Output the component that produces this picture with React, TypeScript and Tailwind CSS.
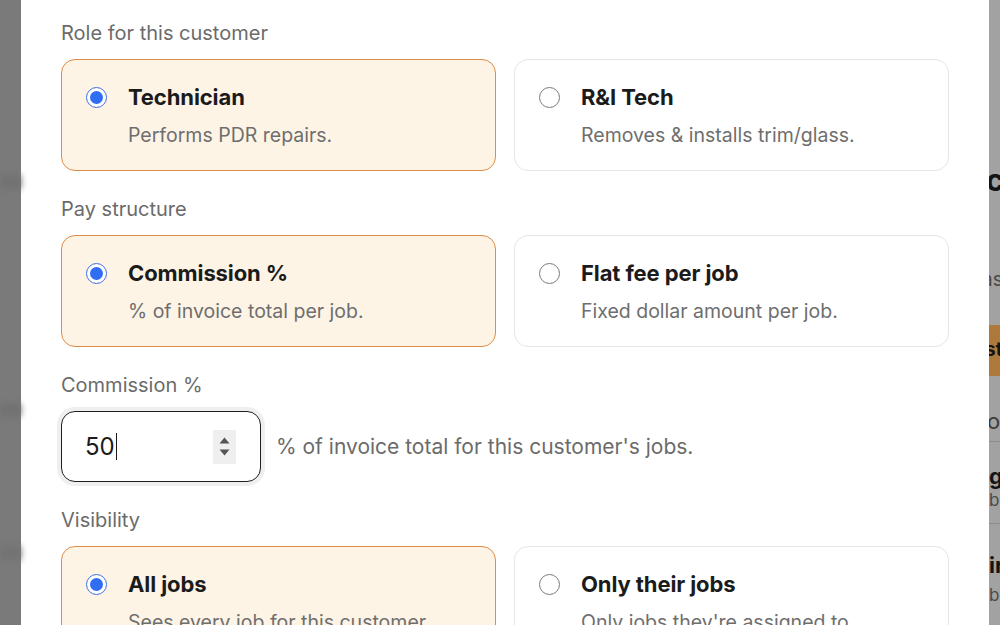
import React from "react";

type Opt = { title: string; desc: string };

function Radio({ checked }: { checked: boolean }) {
  if (checked) {
    return (
      <span className="flex h-[21px] w-[21px] shrink-0 items-center justify-center rounded-full border-[1.5px] border-[#3b6fe3] bg-white">
        <span className="h-[13px] w-[13px] rounded-full bg-[#2f6ef2]" />
      </span>
    );
  }
  return <span className="h-[21px] w-[21px] shrink-0 rounded-full border-[1.5px] border-[#7a7a7a] bg-white" />;
}

function Card({ opt, checked }: { opt: Opt; checked: boolean }) {
  return (
    <div
      className={
        checked
          ? "flex h-[112px] items-start gap-[21px] rounded-[14px] border-[1.5px] border-[#df8c48] bg-[#fdf4e6] pl-[24px] pt-[22px]"
          : "flex h-[112px] items-start gap-[21px] rounded-[14px] border-[1.5px] border-[#e6e6e6] bg-white pl-[24px] pt-[22px]"
      }
    >
      <div className="flex h-[30px] items-center">
        <Radio checked={checked} />
      </div>
      <div className="flex flex-col">
        <div className="text-[22px] font-bold leading-[30px] tracking-[-0.1px] text-[#1b1b1b]">{opt.title}</div>
        <div className="mt-[9px] text-[19.5px] leading-[28px] text-[#6e6e6e]">{opt.desc}</div>
      </div>
    </div>
  );
}

function Section({ label, options }: { label: string; options: Opt[] }) {
  return (
    <div className="flex flex-col">
      <div className="mb-[12px] text-[20px] leading-[28px] text-[#6b6b6b]">{label}</div>
      <div className="grid grid-cols-2 gap-[18px]">
        <Card opt={options[0]} checked />
        <Card opt={options[1]} checked={false} />
      </div>
    </div>
  );
}

export default function App() {
  return (
    <div
      className="flex h-[625px] w-[1000px] overflow-hidden bg-white"
      style={{ fontFamily: "Inter, 'Noto Sans', 'Liberation Sans', sans-serif" }}
    >
      {/* left backdrop */}
      <div className="flex w-[21px] shrink-0 flex-col bg-[#7a7a7a]">
        <div className="h-[175px]" />
        <div className="h-[14px] bg-[#727272] blur-[3px]" />
        <div className="h-[215px]" />
        <div className="h-[12px] bg-[#717171] blur-[3px]" />
        <div className="h-[130px]" />
        <div className="h-[14px] bg-[#737373] blur-[3px]" />
      </div>

      {/* modal */}
      <div className="flex w-[968px] shrink-0 flex-col gap-[24px] bg-white px-[40px] pt-[19px]">
        <Section
          label="Role for this customer"
          options={[
            { title: "Technician", desc: "Performs PDR repairs." },
            { title: "R&I Tech", desc: "Removes & installs trim/glass." },
          ]}
        />
        <Section
          label="Pay structure"
          options={[
            { title: "Commission %", desc: "% of invoice total per job." },
            { title: "Flat fee per job", desc: "Fixed dollar amount per job." },
          ]}
        />
        <div className="flex flex-col">
          <div className="mb-[12px] text-[20px] leading-[28px] text-[#6b6b6b]">Commission %</div>
          <div className="flex items-center gap-[15px]">
            <div className="flex h-[71px] w-[200px] items-center rounded-[14px] border-[1.5px] border-[#1f1f1f] bg-white pl-[23px] pr-[24px] shadow-[0_0_0_4px_#efefef]">
              <span className="text-[24px] leading-none text-[#1b1b1b]">50</span>
              <span className="ml-[1px] h-[27px] w-[1.5px] bg-[#1b1b1b]" />
              <div className="ml-auto flex h-[34px] w-[23px] flex-col items-center justify-center gap-[5px] bg-[#efefef]">
                <svg width="11" height="7" viewBox="0 0 11 7">
                  <path d="M5.5 0.5 L10.5 6.5 L0.5 6.5 Z" fill="#555" />
                </svg>
                <svg width="11" height="7" viewBox="0 0 11 7">
                  <path d="M0.5 0.5 L10.5 0.5 L5.5 6.5 Z" fill="#555" />
                </svg>
              </div>
            </div>
            <span className="text-[21px] text-[#6b6b6b]">% of invoice total for this customer's jobs.</span>
          </div>
        </div>
        <Section
          label="Visibility"
          options={[
            { title: "All jobs", desc: "Sees every job for this customer." },
            { title: "Only their jobs", desc: "Only jobs they're assigned to." },
          ]}
        />
      </div>

      {/* right backdrop */}
      <div className="flex w-[12px] shrink-0 flex-col overflow-hidden whitespace-nowrap bg-[#a2a2a2] text-[#141414]">
        <div className="h-[162px]" />
        <div className="-ml-[3px] text-[30px] font-bold leading-[36px]">cu</div>
        <div className="h-[70px]" />
        <div className="-ml-[7px] text-[19px] leading-[24px] text-[#4a4a4a]">as</div>
        <div className="h-[33px]" />
        <div className="flex h-[51px] items-center bg-[#ad7a3b] pl-[0px] text-[19px] font-bold">
          <span className="-ml-[4px]">sto</span>
        </div>
        <div className="h-[32px]" />
        <div className="-ml-[2px] text-[22px] leading-[26px] text-[#3a3a3a]">o</div>
        <div className="h-[7px]" />
        <div className="h-px bg-[#8c8c8c]" />
        <div className="h-[21px]" />
        <div className="text-[22px] font-bold leading-[26px]">g</div>
        <div className="text-[17px] leading-[22px] text-[#4a4a4a]">b</div>
        <div className="h-[12px]" />
        <div className="h-px bg-[#8c8c8c]" />
        <div className="h-[28px]" />
        <div className="text-[22px] font-bold leading-[26px]">ir</div>
        <div className="mt-[6px] text-[17px] leading-[22px] text-[#4a4a4a]">b</div>
      </div>
    </div>
  );
}
